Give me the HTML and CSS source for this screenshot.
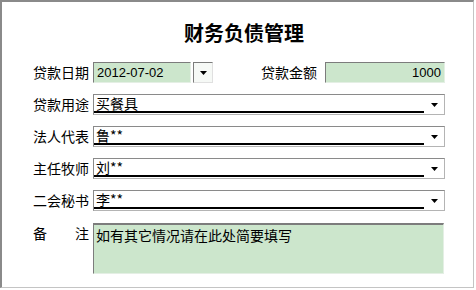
FILE: index.html
```html
<!DOCTYPE html>
<html lang="zh">
<head>
<meta charset="utf-8">
<title>财务负债管理</title>
<link rel="stylesheet" href="styles.css">
</head>
<body>
<div class="frame">
  <div class="title">财务负债管理</div>
  <div class="form">
    <div class="row">
      <span class="label">贷款日期</span>
      <div class="field date">2012-07-02</div>
      <div class="dropbtn"><svg class="tri" width="7" height="4" viewBox="0 0 7 4"><path d="M0 0H7L3.5 4Z" fill="#000"/></svg></div>
      <span class="label label-amount">贷款金额</span>
      <div class="field amount">1000</div>
    </div>
    <div class="row">
      <span class="label">贷款用途</span>
      <div class="combo"><div class="combo-text">买餐具</div><div class="combo-arrow"><svg class="tri" width="7" height="4" viewBox="0 0 7 4"><path d="M0 0H7L3.5 4Z" fill="#000"/></svg></div></div>
    </div>
    <div class="row">
      <span class="label">法人代表</span>
      <div class="combo"><div class="combo-text">鲁**</div><div class="combo-arrow"><svg class="tri" width="7" height="4" viewBox="0 0 7 4"><path d="M0 0H7L3.5 4Z" fill="#000"/></svg></div></div>
    </div>
    <div class="row">
      <span class="label">主任牧师</span>
      <div class="combo"><div class="combo-text">刘**</div><div class="combo-arrow"><svg class="tri" width="7" height="4" viewBox="0 0 7 4"><path d="M0 0H7L3.5 4Z" fill="#000"/></svg></div></div>
    </div>
    <div class="row">
      <span class="label">二会秘书</span>
      <div class="combo"><div class="combo-text">李**</div><div class="combo-arrow"><svg class="tri" width="7" height="4" viewBox="0 0 7 4"><path d="M0 0H7L3.5 4Z" fill="#000"/></svg></div></div>
    </div>
    <div class="row row-notes">
      <span class="label label-split"><span>备</span><span>注</span></span>
      <div class="notes">如有其它情况请在此处简要填写</div>
    </div>
  </div>
</div>
</body>
</html>
```
FILE: styles.css
```css
html, body {
  margin: 0;
  padding: 0;
  background: #ffffff;
}
body {
  font-family: "Noto Sans CJK SC", "Noto Sans", sans-serif;
  color: #000;
  font-size: 14px;
}
.frame {
  width: 474px;
  height: 288px;
  box-sizing: border-box;
  border-top: 2px solid #8a8a8a;
  border-left: 2px solid #8a8a8a;
  border-right: 1px solid #c4c4c4;
  border-bottom: 1px solid #c4c4c4;
  padding: 18px 0 0 31px;
  display: flex;
  flex-direction: column;
}
.title {
  font-size: 20px;
  font-weight: bold;
  line-height: 25px;
  height: 25px;
  text-align: center;
  padding-right: 18px;
}
.form {
  margin-top: 17px;
  display: flex;
  flex-direction: column;
  gap: 11px;
}
.row {
  display: flex;
  align-items: center;
  height: 21px;
}
.label {
  width: 56px;
  line-height: 21px;
  white-space: nowrap;
  flex: none;
  margin-right: 4px;
}
.label-split {
  display: flex;
  justify-content: space-between;
}
.label-amount {
  margin-left: 48px;
  margin-right: 8px;
}
.field {
  height: 21px;
  box-sizing: border-box;
  background: #cce6cc;
  border-top: 1px solid #7c7c7c;
  border-left: 1px solid #7c7c7c;
  border-right: 1px solid #e4efe4;
  border-bottom: 1px solid #e4efe4;
  font-family: "Liberation Sans", Arial, sans-serif;
  font-size: 13px;
  line-height: 19px;
}
.date {
  width: 98px;
  padding-left: 3px;
}
.dropbtn {
  width: 20px;
  height: 21px;
  margin-left: 2px;
  box-sizing: border-box;
  border-top: 1px solid #7c7c7c;
  border-left: 1px solid #7c7c7c;
  border-right: 1px solid #e0e0e0;
  border-bottom: 1px solid #e0e0e0;
  background: #f6f9f6;
  display: flex;
  align-items: center;
  justify-content: center;
}
.amount {
  width: 120px;
  text-align: right;
  padding-right: 3px;
}
.combo {
  width: 352px;
  height: 21px;
  box-sizing: border-box;
  border-top: 1px solid #8a8a8a;
  border-left: 1px solid #8a8a8a;
  border-right: 1px solid #b4b4b4;
  border-bottom: 1px solid #b4b4b4;
  display: flex;
  background: #fff;
}
.combo-text {
  flex: 1;
  height: 16px;
  line-height: 17px;
  padding-left: 2px;
  border-bottom: 2px solid #000;
  white-space: nowrap;
}
.combo-arrow {
  width: 19px;
  display: flex;
  align-items: center;
  justify-content: center;
  padding-left: 1px;
}
.tri {
  display: block;
}
.row-notes {
  height: 51px;
  align-items: flex-start;
  margin-top: 1px;
}
.notes {
  width: 351px;
  height: 51px;
  box-sizing: border-box;
  background: #cce6cc;
  border-top: 2px solid #7c7c7c;
  border-left: 1px solid #7c7c7c;
  border-right: 1px solid #e4efe4;
  border-bottom: 1px solid #e4efe4;
  padding-left: 2px;
  line-height: 20px;
}
```
